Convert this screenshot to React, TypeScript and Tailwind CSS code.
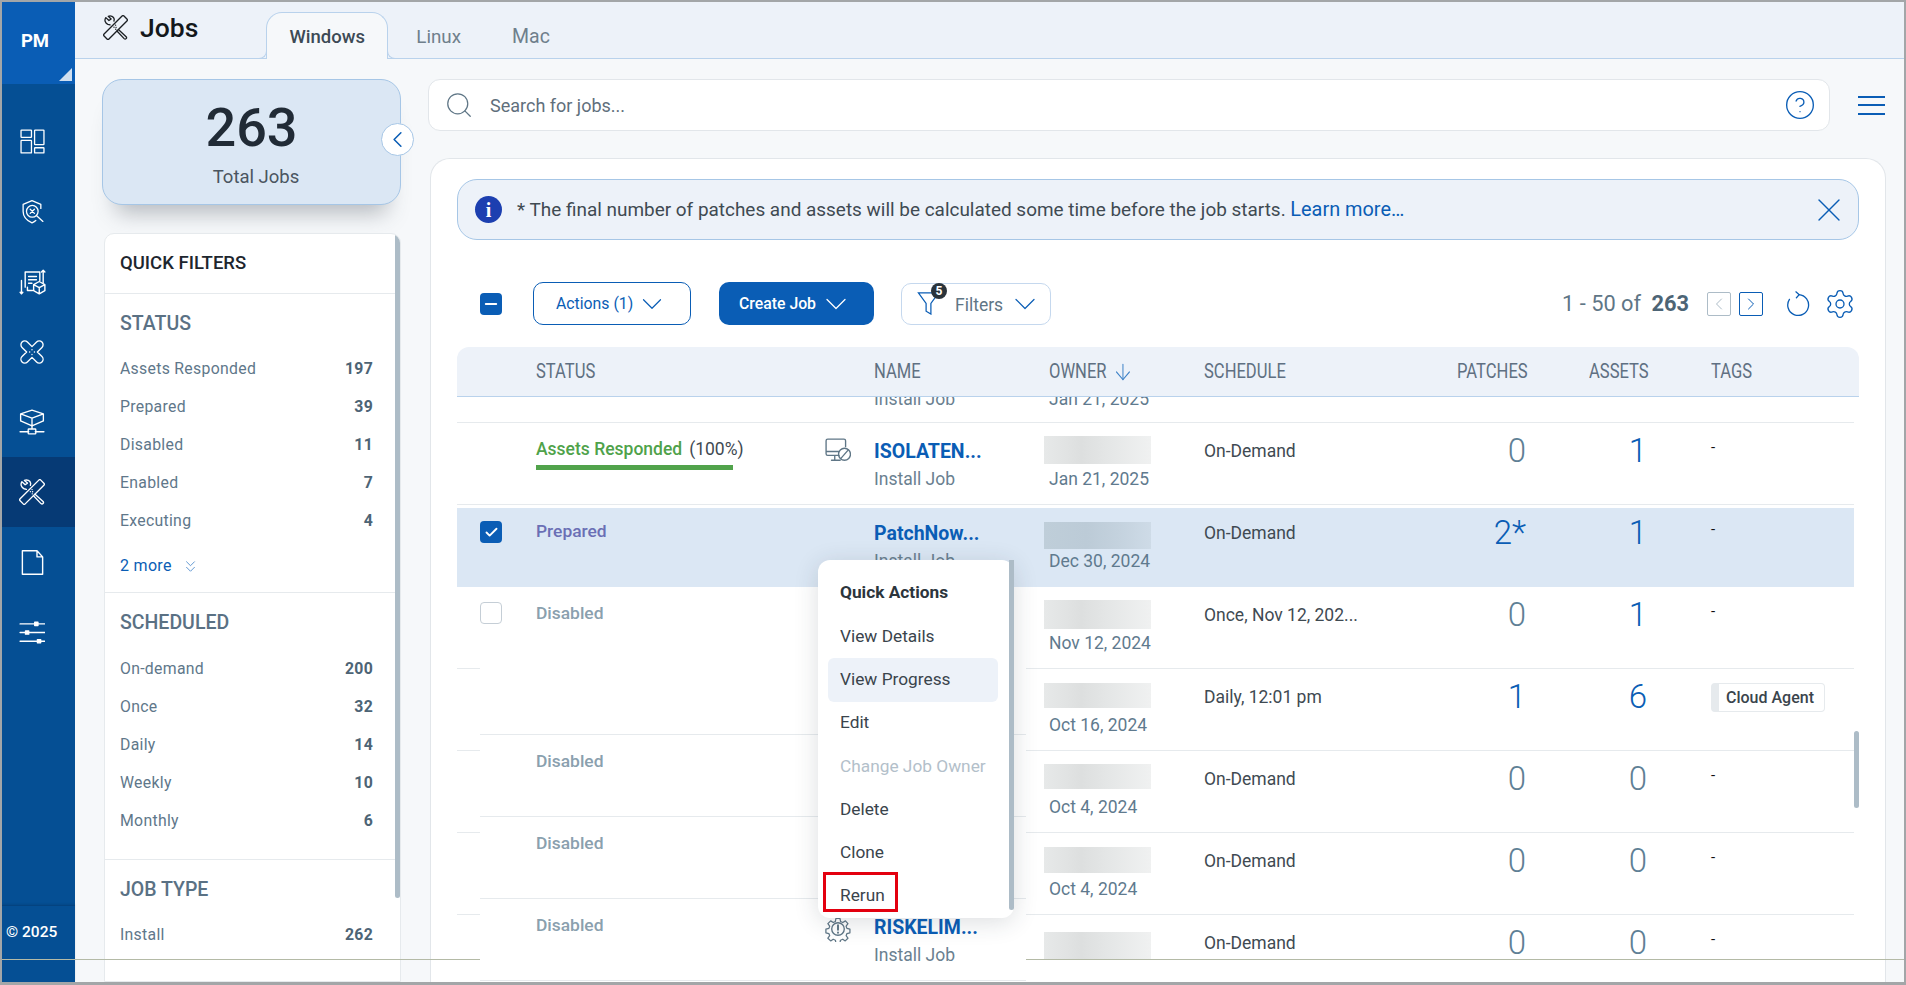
import React from 'react';
import { ChevronDown, ChevronLeft, ChevronRight, ChevronsDown, CircleHelp, Search, Settings, X, ArrowDown, Check, Minus } from 'lucide-react';

type IconProps = { className?: string };

const Svg = ({ className, children }: IconProps & { children: React.ReactNode }) => (
  <svg viewBox="0 0 24 24" fill="none" stroke="currentColor" strokeWidth="1.25" strokeLinecap="round" strokeLinejoin="round" className={className}>
    {children}
  </svg>
);

// sidebar icons
const DashboardIcon = ({ className }: IconProps) => (
  <Svg className={className}>
    <rect x="1" y="1" width="10" height="7" rx="0.5" />
    <rect x="1" y="11" width="10" height="12" rx="0.5" />
    <rect x="14" y="1" width="9" height="14" rx="0.5" />
    <rect x="14" y="18" width="9" height="5" rx="0.5" />
  </Svg>
);

const ShieldIcon = ({ className }: IconProps) => (
  <Svg className={className}>
    <path d="M20 9V5.2L11.5 1.5 3 5.2V12c0 5 3.8 8.8 8.5 11 1.4-.6 2.6-1.4 3.7-2.3" />
    <circle cx="11.8" cy="11.8" r="5.6" />
    <path d="M9.8 9.8l4 4M13.8 9.8l-4 4M16 16l6 5.5" />
  </Svg>
);

const DeployIcon = ({ className }: IconProps) => (
  <Svg className={className}>
    <path d="M5.5 17V3.5h13V11M12 20H7.5V17M8.5 7.5h7M8.5 10.5h7M8.5 13.5h3" />
    <path d="M21.5 2v11M20 3.5L21.5 2 23 3.5M2.2 11v12M1 21.5L2.2 23 3.4 21.5" />
    <path d="M18 12l5 2.8v5.4L18 23l-5-2.8v-5.4zM13 14.8l5 2.7 5-2.7M18 17.5V23" />
  </Svg>
);

const BandageIcon = ({ className }: IconProps) => (
  <Svg className={className}>
    <path transform="rotate(45 12 12)" d="M8.5 2.500a3.500 3.500 0 0 1 7 0V8.500H21.500a3.500 3.500 0 0 1 0 7H15.500V21.500a3.500 3.500 0 0 1-7 0V15.500H2.500a3.500 3.500 0 0 1 0-7H8.500Z" />
    <path d="M12 9.800v.1M9.800 12h.1M14.200 12h.1M12 14.200v.1" />
  </Svg>
);

const CubeNetIcon = ({ className }: IconProps) => (
  <Svg className={className}>
    <path d="M12 1l10.500 3.500v6.500L12 15.500 1.500 11V4.500zM1.500 4.500L12 8.500l10.500-4M12 8.500v7" />
    <path d="M12 15.500V18M1 21h8M15 21h8" />
    <rect x="8.500" y="18.500" width="7" height="4.500" rx="0.600" />
  </Svg>
);

const JobsIcon = ({ className }: IconProps) => (
  <Svg className={className}>
    <rect x="8.700" y="-1.500" width="6.600" height="27" rx="1.300" transform="rotate(45 12 12)" />
    <path d="M6.800 9.500L4.700 9C2.200 8 1 5 2.700 2.500L5.700 5.300 7.800 3.800 5 1.300C7.500.3 10.300 1.500 10.800 4L10.500 5.800" />
    <path d="M14.800 14l7.400 6.800c1.200 1.300-.6 3.100-1.900 1.900l-6.900-7.300" />
    <path d="M10.500 11.700h.1M12.500 11.800h.1M12 9.800h.1M12.200 13.700h.1" />
  </Svg>
);

const FileIcon = ({ className }: IconProps) => (
  <Svg className={className}>
    <path d="M3 1.500h13l5 5.500v15.500H3zM16 1.500V7h5" />
  </Svg>
);

const SlidersIcon = ({ className }: IconProps) => (
  <Svg className={className}>
    <path d="M1 4.500h23M1 12.500h23M1 20.500h23" />
    <rect x="14.500" y="3" width="3" height="3" fill="currentColor" />
    <rect x="6" y="11" width="3" height="3" fill="currentColor" />
    <rect x="17" y="19" width="3" height="3" fill="currentColor" />
  </Svg>
);

const MonitorBanIcon = ({ className }: IconProps) => (
  <Svg className={className}>
    <path d="M13 16H2.500A1.500 1.500 0 0 1 1 14.500v-12A1.500 1.500 0 0 1 2.500 1h15A1.500 1.500 0 0 1 19 2.500V8M1 12.500h12M6 20.500h8M9 16v4.500" />
    <circle cx="18" cy="15" r="5.500" />
    <path d="M14.500 19l7-8" />
  </Svg>
);

const GearAlertIcon = ({ className }: IconProps) => (
  <Svg className={className}>
    <path d="M10 1.500h4l.6 3 2.200 1 2.700-1.600 2.500 2.800-1.800 2.500.8 2.200 3 .7v3.800l-3 .7-.8 2.200 1.800 2.500-2.700 2.700-2.500-1.700-2.300 1-.5 2.900h-4l-.6-2.900-2.200-1-2.500 1.700-2.800-2.700 1.800-2.500-.8-2.200-3-.7v-3.800l3-.7.800-2.200-1.800-2.500 2.800-2.800 2.600 1.600 2.100-1z" transform="scale(0.920) translate(1 1)" />
    <circle cx="12" cy="12" r="5.800" />
    <path d="M12 8.500v4.200M12 15.300v.1" strokeWidth="1.800" />
  </Svg>
);

const RefreshIcon = ({ className }: IconProps) => (
  <Svg className={className}>
    <path d="M12.500 3.500A10 10 0 1 1 3.300 8" />
    <path d="M9.500.8l3.200 2.700-2.700 3" />
  </Svg>
);

const navItems = [
  { icon: DashboardIcon, size: 'size-[25px]', active: false },
  { icon: ShieldIcon, size: 'size-[25px]', active: false },
  { icon: DeployIcon, size: 'size-[27px]', active: false },
  { icon: BandageIcon, size: 'size-[26px]', active: false },
  { icon: CubeNetIcon, size: 'size-[26px]', active: false },
  { icon: JobsIcon, size: 'size-[26px]', active: true },
  { icon: FileIcon, size: 'size-[27px]', active: false },
  { icon: SlidersIcon, size: 'size-[26px]', active: false },
];

const statusFilters = [
  ['Assets Responded', '197'],
  ['Prepared', '39'],
  ['Disabled', '11'],
  ['Enabled', '7'],
  ['Executing', '4'],
];

const scheduledFilters = [
  ['On-demand', '200'],
  ['Once', '32'],
  ['Daily', '14'],
  ['Weekly', '10'],
  ['Monthly', '6'],
];

const FilterRow = ({ label, count }: { label: string; count: string }) => (
  <div className="flex h-[38px] items-center justify-between pr-[27px] pl-[15px] text-[15.800px] tracking-[0.300px] text-[#60778a]">
    <span>{label}</span>
    <span className="font-bold text-[#4d6475]">{count}</span>
  </div>
);

const Sidebar = () => (
  <aside className="flex w-[73px] shrink-0 flex-col bg-[#054f94] text-white">
    <div className="relative flex h-[82px] items-center justify-center bg-[#0a5db5] pr-[7px] pb-[2px] text-[18.500px] font-bold">
      PM
      <svg viewBox="0 0 13 13" className="absolute right-[3px] bottom-[3px] size-[13px]">
        <polygon points="13,0 13,13 0,13" fill="#cfdff0" />
      </svg>
    </div>
    <nav className="flex flex-col pt-[22px]">
      {navItems.map(({ icon: Icon, size, active }, i) => (
        <div key={i} className={`flex h-[70.200px] items-center justify-center pr-[13px] ${active ? 'bg-[#063a75]' : ''}`}>
          <Icon className={size} />
        </div>
      ))}
    </nav>
    <div className="mt-auto flex h-[77.500px] items-start border-t border-[#044380] pt-[15px] pl-[4px] text-[15.500px] font-medium shadow-[0_-1px_2px_rgba(0,0,0,0.1)]">
      © 2025
    </div>
  </aside>
);

const Header = () => (
  <header className="flex h-[57px] shrink-0 items-start border-b border-[#b9d2ec] bg-[#edf2f9]">
    <div className="flex items-center pt-[13px] pl-[28px]">
      <JobsIcon className="size-[25px] text-[#1b1f23]" />
      <span className="ml-[12px] text-[26.500px] leading-[24px] font-medium text-[#14181c]">Jobs</span>
    </div>
    <div className="mt-[10px] ml-[68px] flex h-[47px] items-center">
      <div className="relative z-10 flex h-[47px] w-[122px] items-center justify-center rounded-t-[16px] border border-b-0 border-[#b9d2ec] bg-[#f6f8fa] pt-[3px] text-[18.500px] font-medium text-[#3d4a55]">
        Windows
        <span className="absolute bottom-0 -left-[8px] size-[8px] rounded-br-[8px] border-r border-b border-[#b9d2ec]" />
        <span className="absolute -right-[8px] bottom-0 size-[8px] rounded-bl-[8px] border-b border-l border-[#b9d2ec]" />
      </div>
      <span className="ml-[28px] pt-[3px] text-[18.800px] text-[#6f7f8c]">Linux</span>
      <span className="ml-[51px] pt-[3px] text-[19.500px] text-[#6f7f8c]">Mac</span>
    </div>
  </header>
);

const sectionTitle = 'flex items-center pt-[3px] pl-[15px] text-[19.500px] font-medium text-[#5a7184]';

const FiltersColumn = () => (
  <div className="flex w-[299px] shrink-0 flex-col pt-[20px]">
    <div className="relative flex h-[126px] flex-col items-center rounded-[20px] border border-[#a6c6e6] bg-[#dbe7f4] shadow-[0_22px_22px_-14px_rgba(60,70,80,0.35)]">
      <span className="mt-[18px] text-[54px] leading-[60px] font-medium text-[#212b36]">263</span>
      <span className="mt-[7px] ml-[9px] text-[18.500px] leading-[24px] text-[#4a5560]">Total Jobs</span>
      <button className="absolute top-[43px] -right-[14px] flex size-[33px] items-center justify-center rounded-full border border-[#a6c6e6] bg-white text-[#0a5db5]">
        <ChevronLeft className="size-[27px]" strokeWidth={1.400} />
      </button>
    </div>
    <div className="relative mt-[28px] ml-[2px] flex-1 overflow-hidden rounded-t-[10px] border border-[#e6eaed] bg-white">
      <div className="absolute top-0 right-0 h-[664px] w-[5px] rounded-b-[3px] bg-[#adbcc7]" />
      <div className="flex h-[60px] items-center border-b border-[#e6eaed] pl-[15px] text-[18.500px] font-medium text-[#1d262e]">QUICK FILTERS</div>
      <div className="h-[299px] border-b border-[#e6eaed]">
        <div className={`${sectionTitle} h-[56px]`}>STATUS</div>
        {statusFilters.map(([label, count]) => <FilterRow key={label} label={label} count={count} />)}
        <div className="flex h-[52px] items-center pl-[15px] text-[16px] tracking-[0.300px] text-[#0a5db5]">
          2 more
          <ChevronsDown className="ml-[9px] size-[19px] text-[#5b93d0]" strokeWidth={1.200} />
        </div>
      </div>
      <div className="h-[267px] border-b border-[#e6eaed]">
        <div className={`${sectionTitle} h-[57px]`}>SCHEDULED</div>
        {scheduledFilters.map(([label, count]) => <FilterRow key={label} label={label} count={count} />)}
      </div>
      <div className={`${sectionTitle} h-[56px]`}>JOB TYPE</div>
      <FilterRow label="Install" count="262" />
    </div>
  </div>
);

const Toolbar = () => (
  <div className="mt-[42px] flex h-[43px] items-center pl-[23px]">
    <span className="flex size-[22px] items-center justify-center rounded-[4px] bg-[#0a5db5] text-white">
      <Minus className="size-[18px]" strokeWidth={2.500} />
    </span>
    <button className="ml-[31px] flex h-[43px] w-[158px] items-center rounded-[10px] border border-[#0a5db5] pl-[22px] text-[15.800px] text-[#0a5db5]">
      Actions (1)
      <ChevronDown className="-my-[4px] ml-[2px] size-[34px]" strokeWidth={0.850} />
    </button>
    <button className="ml-[28px] flex h-[43px] w-[155px] items-center rounded-[10px] bg-[#0a5db5] pl-[20px] text-[15.800px] font-medium text-white">
      Create Job
      <ChevronDown className="-my-[4px] ml-[2px] size-[36px]" strokeWidth={0.850} />
    </button>
    <button className="ml-[27px] flex h-[42px] w-[150px] items-center rounded-[10px] border border-[#c5d8ee] pl-[15px] text-[17.500px] text-[#5f7686]">
      <span className="relative mr-[15px] block size-[23px] text-[#0a5db5]">
        <svg viewBox="0 0 23 24" fill="none" stroke="currentColor" strokeWidth="1.300" className="size-[23px]">
          <path d="M1 1h21l-8 11v11l-5-3v-8z" />
        </svg>
        <span className="absolute -top-[9px] -right-[7px] flex size-[16px] items-center justify-center rounded-full bg-[#2a333b] text-[12px] font-bold text-white">5</span>
      </span>
      <span className="pt-[3px]">Filters</span>
      <ChevronDown className="-my-[4px] ml-[4px] size-[36px] text-[#0a5db5]" strokeWidth={0.800} />
    </button>
    <div className="ml-auto flex items-center">
      <span className="pt-[2px] text-[21.800px] text-[#5f7686]">1 - 50 of <b className="ml-[5px] font-bold text-[#4d6475]">263</b></span>
      <span className="ml-[18px] flex size-[24px] items-center justify-center rounded-[2px] border border-[#adbcc7] text-[#adbcc7]">
        <ChevronLeft className="size-[20px]" strokeWidth={1.200} />
      </span>
      <span className="ml-[8px] flex size-[24px] items-center justify-center rounded-[2px] border border-[#0a5db5] text-[#0a5db5]">
        <ChevronRight className="size-[20px]" strokeWidth={1.200} />
      </span>
      <RefreshIcon className="ml-[23px] size-[25px] text-[#0a5db5]" />
      <Settings className="mr-[3px] ml-[13px] size-[32px] text-[#0a5db5]" strokeWidth={1} />
    </div>
  </div>
);

const headCell = 'origin-left scale-x-[0.850] whitespace-nowrap';

const TableHead = () => (
  <div className="mt-[22px] grid h-[50px] grid-cols-[79px_338px_175px_155px_253px_132px_122px_148px] items-center rounded-t-[12px] border-b border-[#b9d2ec] bg-[#edf2f9] text-[19.500px] text-[#5f7082]">
    <span />
    <span className={headCell}>STATUS</span>
    <span className={headCell}>NAME</span>
    <span className={`${headCell} flex items-center`}>OWNER<ArrowDown className="ml-[6px] size-[26px] text-[#3f83c8]" strokeWidth={1.100} /></span>
    <span className={headCell}>SCHEDULE</span>
    <span className={headCell}>PATCHES</span>
    <span className={headCell}>ASSETS</span>
    <span className={headCell}>TAGS</span>
  </div>
);

type OwnerRow = {
  date: string;
  schedule: string;
  patches: string;
  assets: string;
  blur: string;
  tag?: string;
  shaded?: boolean;
};

const Num = ({ value }: { value: string }) => (
  <span className={`block pt-[8px] text-right text-[33px] leading-[40px] font-light ${value === '0' ? 'text-[#5f8095]' : 'text-[#0a5db5]'}`}>{value}</span>
);

// owner, schedule, patches, assets, tags: shared by the full rows and the right-hand block
const OwnerCells = ({ row }: { row: OwnerRow }) => (
  <>
    <div className="h-[81px]">
      <div className="flex h-[44px] flex-col">
        <div className={`w-[107px] ${row.blur} ${row.shaded ? 'bg-[linear-gradient(90deg,#bfced9,#bccbd7_40%,#c4d2de_70%,#cedbe7)]' : 'bg-[linear-gradient(90deg,#e7e9e9,#dddfdf_35%,#e6e8e8_65%,#f0f1f1)]'}`} />
      </div>
      <div className="pl-[5px] text-[17.500px] leading-[24px] text-[#5f7a8e]">{row.date}</div>
    </div>
    <div className="pt-[16px] text-[17.500px] leading-[24px] text-[#3f4a52]">{row.schedule}</div>
    <Num value={row.patches} />
    <Num value={row.assets} />
    <div className="pt-[14px] pl-[64px] text-[15px] leading-[20px] text-[#111]">
      {row.tag ? (
        <span className="flex h-[29px] w-[114px] items-center rounded-[4px] border border-l-[8px] border-[#e6eaed] pl-[7px] text-[16px] font-medium text-[#3a444c]">{row.tag}</span>
      ) : '-'}
    </div>
  </>
);

const rowGrid = 'grid grid-cols-[79px_289px_49px_170px_160px_253px_69px_121px_207px]';

const NameCell = ({ name }: { name: string }) => (
  <div>
    <div className="pt-[17px] text-[19.500px] leading-[24px] font-bold text-[#0a5db5]">{name}</div>
    <div className="mt-[3px] text-[17.500px] leading-[24px] text-[#6a8090]">Install Job</div>
  </div>
);

const TopRows = () => (
  <div className="w-[1397px]">
    <div className={`${rowGrid} h-[26px] overflow-hidden border-b border-[#e6eaed] text-[17.500px] leading-[24px] text-[#6a8090]`}>
      <span /><span /><span />
      <span className="-mt-[10px]">Install Job</span>
      <span className="-mt-[10px] pl-[5px] text-[#5f7a8e]">Jan 21, 2025</span>
    </div>
    <div className={`${rowGrid} h-[82px] border-b border-[#e6eaed]`}>
      <span />
      <div className="pt-[14px]">
        <div className="flex items-center text-[17.500px] leading-[24px] font-medium text-[#4fa24a]">
          Assets Responded
          <span className="ml-[7px] font-normal text-[#3f4a52]">(100%)</span>
        </div>
        <div className="mt-[4px] h-[5px] w-[197px] bg-[#51a34b]" />
      </div>
      <div className="pt-[15px]"><MonitorBanIcon className="size-[26px] text-[#5f7686]" /></div>
      <NameCell name="ISOLATEN..." />
      <OwnerCells row={{ date: 'Jan 21, 2025', schedule: 'On-Demand', patches: '0', assets: '1', blur: 'mt-[13px] h-[28px]' }} />
    </div>
    <div className={`${rowGrid} mt-[3px] h-[79px] overflow-hidden bg-[#dbe7f4]`}>
      <div className="pt-[13px] pl-[23px]">
        <span className="flex size-[22px] items-center justify-center rounded-[4px] bg-[#0a5db5] text-white">
          <Check className="size-[15px]" strokeWidth={3} />
        </span>
      </div>
      <div className="pt-[11px] text-[17.400px] leading-[24px] font-medium text-[#6a6fb5]">Prepared</div>
      <span />
      <div className="-mt-[3px]"><NameCell name="PatchNow..." /></div>
      <div className="col-span-5 -mt-[3px] grid grid-cols-[160px_253px_69px_121px_207px]">
        <OwnerCells row={{ date: 'Dec 30, 2024', schedule: 'On-Demand', patches: '2*', assets: '1', blur: 'mt-[17px] h-[27px]', shaded: true }} />
      </div>
    </div>
  </div>
);

const disabledText = 'text-[17.400px] leading-[24px] font-medium text-[#8aa0ae]';

const lowerRight: OwnerRow[] = [
  { date: 'Nov 12, 2024', schedule: 'Once, Nov 12, 202...', patches: '0', assets: '1', blur: 'mt-[13px] h-[29px]' },
  { date: 'Oct 16, 2024', schedule: 'Daily, 12:01 pm', patches: '1', assets: '6', blur: 'mt-[14px] h-[25px]', tag: 'Cloud Agent' },
  { date: 'Oct 4, 2024', schedule: 'On-Demand', patches: '0', assets: '0', blur: 'mt-[13px] h-[25px]' },
  { date: 'Oct 4, 2024', schedule: 'On-Demand', patches: '0', assets: '0', blur: 'mt-[14px] h-[26px]' },
  { date: '', schedule: 'On-Demand', patches: '0', assets: '0', blur: 'mt-[17px] h-[28px]' },
];

// the lower part of the list: the middle block is offset from its neighbours in the capture
const LowerRows = () => (
  <div className="flex h-[395px] w-[1397px] overflow-hidden">
    <div className="w-[23px] shrink-0 pt-[81px]">
      {[0, 1, 2, 3].map((i) => (
        <div key={i} className="h-[82px] border-t border-[#e6eaed]" />
      ))}
    </div>
    <div className="w-[546px] shrink-0">
      <div className="grid h-[147px] grid-cols-[56px_200px] content-start pt-[15px]">
        <span className="size-[22px] rounded-[4px] border border-[#c5ced6] bg-white" />
        <span className={`${disabledText} -mt-[1px]`}>Disabled</span>
      </div>
      <div className="h-[82px] border-t border-[#e6eaed] pt-[14px] pl-[56px]"><span className={disabledText}>Disabled</span></div>
      <div className="h-[82px] border-t border-[#e6eaed] pt-[14px] pl-[56px]"><span className={disabledText}>Disabled</span></div>
      <div className="grid h-[82px] grid-cols-[56px_289px_49px_152px] border-t border-[#e6eaed]">
        <span />
        <div className="pt-[14px]"><span className={disabledText}>Disabled</span></div>
        <div className="pt-[17px]"><GearAlertIcon className="size-[26px] text-[#5f7686]" /></div>
        <NameCell name="RISKELIM..." />
      </div>
      <div className="border-t border-[#e6eaed]" />
    </div>
    <div className="h-[372px] flex-1 overflow-hidden">
      {lowerRight.map((row) => (
        <div key={row.date + row.schedule + row.blur} className="grid h-[82px] grid-cols-[160px_253px_69px_121px_207px] border-b border-[#e6eaed] pl-[18px]">
          <OwnerCells row={row} />
        </div>
      ))}
    </div>
  </div>
);

const menuItems = ['View Details', 'View Progress', 'Edit', 'Change Job Owner', 'Delete', 'Clone', 'Rerun'];

const QuickActions = () => (
  <div className="absolute top-[558px] left-[816px] z-20 h-[358px] w-[196px] rounded-[12px] bg-white pt-[11px] text-[17.300px] text-[#3a444c] shadow-[0_4px_24px_rgba(40,50,60,0.16)]">
    <div className="absolute top-0 right-0 h-[350px] w-[5px] rounded-b-[3px] bg-[#adbcc7]" />
    <div className="flex h-[44px] items-center pl-[22px] font-bold text-[#2c353c]">Quick Actions</div>
    {menuItems.map((item) => (
      <div
        key={item}
        className={`mx-[10px] flex h-[43.300px] w-[170px] items-center rounded-[6px] pl-[12px] ${item === 'View Progress' ? 'bg-[#edf2f9]' : ''} ${item === 'Change Job Owner' ? 'text-[#b3c0ca]' : ''}`}
      >
        {item}
      </div>
    ))}
    <div className="absolute top-[312px] left-[5px] h-[40px] w-[75px] border-[3px] border-[#e3000f]" />
  </div>
);

export default function App() {
  return (
    <div className="relative flex h-[985px] w-[1906px] overflow-hidden border-2 border-b-[3px] border-[#a3a6a8] bg-[#f6f8fa] [font-family:Roboto,sans-serif]">
      <Sidebar />
      <div className="flex min-w-0 flex-1 flex-col">
        <Header />
        <div className="flex min-h-0 flex-1 pl-[27px]">
          <FiltersColumn />
          <div className="ml-[27px] flex min-w-0 flex-1 flex-col pt-[20px]">
            <div className="flex items-center">
              <div className="flex h-[52px] w-[1402px] items-center rounded-[12px] border border-[#e2e6ea] bg-white pr-[13px] pl-[15px]">
                <Search className="size-[30px] text-[#5f7686]" strokeWidth={1} />
                <span className="ml-[16px] text-[18px] text-[#5f6f7c]">Search for jobs...</span>
                <CircleHelp className="ml-auto size-[32px] text-[#0a5db5]" strokeWidth={1} />
              </div>
              <div className="ml-[28px] flex w-[27px] flex-col gap-[6.500px]">
                <span className="h-[2px] bg-[#0a5db5]" />
                <span className="h-[2px] bg-[#0a5db5]" />
                <span className="h-[2px] bg-[#0a5db5]" />
              </div>
            </div>
            <div className="relative mt-[27px] ml-[2px] w-[1456px] flex-1 overflow-hidden rounded-t-[20px] border border-b-0 border-[#e2e6ea] bg-white px-[26px] pt-[20px]">
              <div className="flex h-[61px] items-center rounded-[20px] border border-[#a6c6e6] bg-[#edf2f9] pr-[9px] pl-[17px]">
                <span className="flex size-[27px] items-center justify-center rounded-full bg-[#1c3fb0] [font-family:'Liberation_Serif',serif] text-[20px] leading-none font-bold text-white">i</span>
                <span className="ml-[15px] text-[18.950px] text-[#3f4a52]">
                  * The final number of patches and assets will be calculated some time before the job starts. <span className="text-[19.900px] text-[#0a5db5]">Learn more…</span>
                </span>
                <X className="-my-[5px] ml-auto size-[40px] text-[#0a5db5]" strokeWidth={0.800} />
              </div>
              <Toolbar />
              <TableHead />
              <div className="relative">
                <div className="absolute top-[334px] right-0 z-10 h-[77px] w-[5px] rounded-[3px] bg-[#adbcc7]" />
                <TopRows />
                <LowerRows />
              </div>
            </div>
          </div>
        </div>
      </div>
      <QuickActions />
      <div className="absolute top-[957px] left-0 z-30 h-px w-[478px] bg-[#b4baa6]" />
      <div className="absolute top-[957px] left-[1024px] z-30 h-px w-[878px] bg-[#b4baa6]" />
    </div>
  );
}
